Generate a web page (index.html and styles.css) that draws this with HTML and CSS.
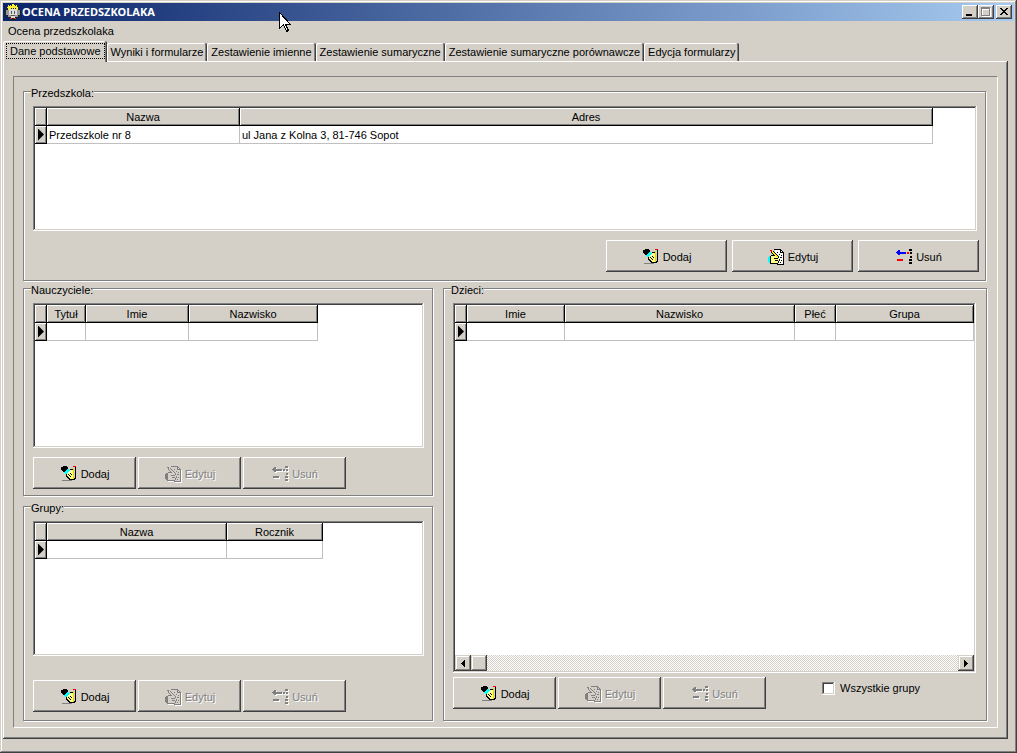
FILE: index.html
```
<!DOCTYPE html>
<html lang="pl">
<head>
<meta charset="utf-8">
<title>OCENA PRZEDSZKOLAKA</title>
<link rel="stylesheet" href="styles.css">
</head>
<body>
<svg class="defs" width="0" height="0" aria-hidden="true">
  <defs>
    <symbol id="i-add" viewBox="0 0 16 16" shape-rendering="crispEdges">
      <path fill="#ff8" d="M9 3h3v10H9v-1H8v-1H7v-1H6V7h1V6h1V4h1z"/>
      <path fill="#000" d="M2 0h4v1h1v2H6v1H5v1H4v1H2V5H1V4H0V1h2zM9 3h3v1H9zM5 8h1v2h1v1h1v1h1v1h3v1H8v-1H7v-1H6v-1H5zM14 1h1v12h-1v1h-2v-1h1v-1h1zM9 7h1v1h1v1h-1V8H9zM7 8h1v1h1v1h1v1H9v-1H8V9H7z"/>
      <path fill="#0ff" d="M6 3h2v1h1v1H8v1H7v1H6v1H4V7H3V6h1V5h1V4h1z"/>
      <path fill="#dd0" d="M12 2h1v11h-1z"/>
      <path fill="#fff" d="M10 5h1v1h-1zM8 6h1v1H8z"/>
      <path fill="#f00" d="M12 0h3v1h-3z"/>
      <path fill="#808080" d="M1 14h10v1H1z"/>
    </symbol>
    <symbol id="i-edit" viewBox="0 0 16 16" shape-rendering="crispEdges">
      <path class="paper" d="M7 1h6v1h1v1h1v12H7z"/>
      <path class="hand" d="M3 7h5v1h3v4h-1v2H3z"/>
      <path class="cuff" d="M1 7h1v7H1zM0 8h1v5H0z"/>
      <path class="ink" d="M6 0h7v1H6zM13 1h1v1h-1zM14 2h1v1h-1zM15 3h1v13H9v-1h6V3zM12 1h1v2h2v1h-3zM2 7h1V6h3v1H3v7H2zM2 14h8v1H2zM10 12h1v2h-1zM11 10h1v2h-1zM6 9h4v1H6zM7 11h3v1H7zM3 3h1v1h1v1h1v1h1v1H6V6H5V5H4V4H3zM5 2h1v1h1v1h1v1h1v1h1v1h1v2h-1V7H9V6H8V5H7V4H6V3H5zM13 6h1v1h-1zM12 8h2v1h-2zM13 11h1v1h-1zM12 13h1v1h-1zM9 3h1v1H9zM11 5h1v1h-1z"/>
      <path class="lead" d="M2 1h2v1H2zM3 2h1v1H3z"/>
      <path class="pen" d="M4 2h1v1h1v1h1v1h1v1h1v1h1v1H8V7H7V6H6V5H5V4H4z"/>
    </symbol>
    <symbol id="i-del" viewBox="0 0 16 16" shape-rendering="crispEdges">
      <path class="arrow" d="M0 3h1V2h1V1h2v2h6v2H4v1H2V5H1V4H0z"/>
      <path class="minus" d="M1 10h6v2H1zM11 3h2v2h-2z"/>
      <path class="ink" d="M13 0h3v2h-3zM14 3h2v2h-2zM14 7h2v2h-2zM13 10h3v2h-3zM13 13h3v2h-3z"/>
    </symbol>
  </defs>
</svg>
<div class="window">
  <header class="titlebar">
    <svg class="app-icon" width="16" height="16" viewBox="0 0 16 16" shape-rendering="crispEdges" aria-hidden="true">
      <path fill="#222" d="M4 1h8v2h2v3h2v6h-2v2h-3v2H5v-2H2v-2H0V6h2V3h2z"/>
      <path fill="#999" d="M3 5h10v1h2v5h-2v2H3v-2H1V6h2z"/>
      <path fill="#ddd" d="M4 5h8v6h-2v3H6v-3H4z"/>
      <path fill="#fe3" d="M3 1h1v1h1V1h1v1h1V0h2v1h1v1h1V1h1v2h1v3h-1V5h-1V4h-1v1H9V4H8v1H7V4H6v1H5v1H3V4H2V3h1z"/>
      <path fill="#555" d="M6 7h1v3H6zM9 7h1v3H9zM6 11h4v1H6z"/>
      <path fill="#b33" d="M5 14h2v1H5zM9 14h2v1H9z"/>
    </svg>
    <h1>OCENA PRZEDSZKOLAKA</h1>
    <div class="caption">
      <button type="button" aria-label="Minimalizuj"><svg width="12" height="10" viewBox="0 0 12 10" shape-rendering="crispEdges"><path d="M2 7h6v2H2z"/></svg></button>
      <button type="button" aria-label="Maksymalizuj" disabled><svg width="12" height="10" viewBox="0 0 12 10" shape-rendering="crispEdges"><path fill="#fff" d="M2 1h9v9H2z"/><path fill="#808080" d="M1 0h9v9H1z"/><path fill="#d4d0c8" d="M2 2h7v6H2z"/><path fill="#fff" d="M2 2h7v1H3v5H2z"/></svg></button>
      <button type="button" class="close" aria-label="Zamknij"><svg width="12" height="10" viewBox="0 0 12 10" shape-rendering="crispEdges"><path d="M2 1h2v1h1v1h2V2h1V1h2v1H9v1H8v1H7v1h1v1h1v1h1v1H8V7H7V6H5v1H4v1H2V7h1V6h1V5h1V4H4V3H3V2H2z"/></svg></button>
    </div>
  </header>
  <nav class="menubar"><button type="button">Ocena przedszkolaka</button></nav>
  <div class="tabs" role="tablist">
    <button type="button" role="tab" aria-selected="true" class="tab active"><span>Dane podstawowe</span></button>
    <button type="button" role="tab" class="tab">Wyniki i formularze</button>
    <button type="button" role="tab" class="tab">Zestawienie imienne</button>
    <button type="button" role="tab" class="tab">Zestawienie sumaryczne</button>
    <button type="button" role="tab" class="tab">Zestawienie sumaryczne porównawcze</button>
    <button type="button" role="tab" class="tab">Edycja formularzy</button>
  </div>
  <main class="page">
    <div class="panel">
      <fieldset class="group">
        <legend>Przedszkola:</legend>
        <div class="grid schools">
          <table>
            <colgroup><col class="mark"><col class="c-school"><col></colgroup>
            <thead><tr><th></th><th>Nazwa</th><th>Adres</th></tr></thead>
            <tbody><tr><th class="current"></th><td>Przedszkole nr 8</td><td>ul Jana z Kolna 3, 81-746 Sopot</td></tr></tbody>
          </table>
        </div>
        <div class="actions wide">
          <button type="button" class="btn"><svg class="icon" width="16" height="16"><use href="#i-add"/></svg>Dodaj</button>
          <button type="button" class="btn"><svg class="icon" width="16" height="16"><use href="#i-edit"/></svg>Edytuj</button>
          <button type="button" class="btn"><svg class="icon" width="16" height="16"><use href="#i-del"/></svg>Usuń</button>
        </div>
      </fieldset>
      <div class="columns">
        <div class="left">
          <fieldset class="group teachers">
            <legend>Nauczyciele:</legend>
            <div class="grid">
              <table>
                <colgroup><col class="mark"><col class="c-title"><col class="c-first"><col class="c-last"></colgroup>
                <thead><tr><th></th><th>Tytuł</th><th>Imie</th><th>Nazwisko</th></tr></thead>
                <tbody><tr><th class="current"></th><td></td><td></td><td></td></tr></tbody>
              </table>
            </div>
            <div class="actions">
              <button type="button" class="btn"><svg class="icon" width="16" height="16"><use href="#i-add"/></svg>Dodaj</button>
              <button type="button" class="btn" disabled><svg class="icon" width="16" height="16"><use href="#i-edit"/></svg>Edytuj</button>
              <button type="button" class="btn" disabled><svg class="icon" width="16" height="16"><use href="#i-del"/></svg>Usuń</button>
            </div>
          </fieldset>
          <fieldset class="group classes">
            <legend>Grupy:</legend>
            <div class="grid">
              <table>
                <colgroup><col class="mark"><col class="c-group"><col class="c-year"></colgroup>
                <thead><tr><th></th><th>Nazwa</th><th>Rocznik</th></tr></thead>
                <tbody><tr><th class="current"></th><td></td><td></td></tr></tbody>
              </table>
            </div>
            <div class="actions">
              <button type="button" class="btn"><svg class="icon" width="16" height="16"><use href="#i-add"/></svg>Dodaj</button>
              <button type="button" class="btn" disabled><svg class="icon" width="16" height="16"><use href="#i-edit"/></svg>Edytuj</button>
              <button type="button" class="btn" disabled><svg class="icon" width="16" height="16"><use href="#i-del"/></svg>Usuń</button>
            </div>
          </fieldset>
        </div>
        <fieldset class="group children">
          <legend>Dzieci:</legend>
          <div class="grid">
            <table>
              <colgroup><col class="mark"><col class="c-name"><col class="c-surname"><col class="c-sex"><col></colgroup>
              <thead><tr><th></th><th>Imie</th><th>Nazwisko</th><th>Płeć</th><th>Grupa</th></tr></thead>
              <tbody><tr><th class="current"></th><td></td><td></td><td></td><td></td></tr></tbody>
            </table>
            <div class="scrollbar">
              <button type="button" aria-label="W lewo"><svg width="4" height="7" viewBox="0 0 4 7" shape-rendering="crispEdges"><path d="M3 0h1v7H3V6H2V5H1V4H0V3h1V2h1V1h1z"/></svg></button>
              <span class="thumb"></span>
              <button type="button" class="end" aria-label="W prawo"><svg width="4" height="7" viewBox="0 0 4 7" shape-rendering="crispEdges"><path d="M0 0h1v1h1v1h1v1h1v1H3v1H2v1H1v1H0z"/></svg></button>
            </div>
          </div>
          <div class="actions">
            <button type="button" class="btn"><svg class="icon" width="16" height="16"><use href="#i-add"/></svg>Dodaj</button>
            <button type="button" class="btn" disabled><svg class="icon" width="16" height="16"><use href="#i-edit"/></svg>Edytuj</button>
            <button type="button" class="btn" disabled><svg class="icon" width="16" height="16"><use href="#i-del"/></svg>Usuń</button>
            <label class="check"><input type="checkbox">Wszystkie grupy</label>
          </div>
        </fieldset>
      </div>
    </div>
  </main>
  <svg class="cursor" width="12" height="21" viewBox="0 0 12 21" shape-rendering="crispEdges" aria-hidden="true"><path fill="#fff" stroke="#000" d="M.5.5v16l4-4 3 7 2-1-3-6h5z"/></svg>
</div>
</body>
</html>
```
FILE: styles.css
```
:root {
  --face: #d4d0c8;
  --shade: #808080;
  --dark: #404040;
}

* { box-sizing: border-box; }

body {
  margin: 0;
  background: var(--face);
  color: #000;
  font: 11px/14px "Liberation Sans", Arial, sans-serif;
}

button {
  margin: 0;
  padding: 0;
  border: 0;
  background: var(--face);
  color: inherit;
  font: inherit;
}

.defs { position: absolute; }

.window {
  position: relative;
  display: flex;
  flex-direction: column;
  min-height: 100vh;
  padding: 3px 2px 2px 3px;
  box-shadow: inset -1px -1px var(--dark), inset 1px 1px var(--face), inset -2px -2px var(--shade), inset 2px 2px #fff;
}

/* title bar */
.titlebar {
  display: flex;
  align-items: center;
  height: 18px;
  margin-right: 1px;
  padding: 0 2px;
  background: linear-gradient(to right, #0a246a, #a6caf0);
  color: #fff;
}

.titlebar h1 {
  flex: 1;
  margin: 0 0 0 1px;
  font: bold 11px/14px "Noto Sans", "DejaVu Sans", sans-serif;
}

.caption { display: flex; }

.caption button {
  display: flex;
  align-items: center;
  justify-content: center;
  width: 16px;
  height: 14px;
  box-shadow: inset -1px -1px var(--dark), inset 1px 1px #fff, inset -2px -2px var(--shade);
}

.caption .close { margin-left: 2px; }

.cursor {
  position: absolute;
  left: 279px;
  top: 12px;
}

/* menu and tabs */
.menubar {
  display: flex;
  height: 20px;
  padding: 0 5px;
}

.tabs {
  display: flex;
  align-items: flex-end;
  height: 20px;
}

.tab {
  height: 18px;
  padding: 0 4px;
  border-radius: 2px 2px 0 0;
  box-shadow: inset -1px 0 var(--dark), inset 1px 1px #fff, inset -2px 0 var(--shade);
  white-space: nowrap;
}

.tab.active {
  position: relative;
  height: 21px;
  margin-bottom: -1px;
  padding: 2px 2px 3px 3px;
}

.tab.active span {
  display: block;
  padding: 0 4px;
  outline: 1px dotted #000;
  outline-offset: -1px;
  line-height: 16px;
}

.page {
  display: flex;
  flex: 1;
  margin: 0 7px 12px 0;
  padding: 15px 10px 11px 10px;
  box-shadow: inset -1px -1px var(--dark), inset 1px 1px #fff, inset -2px -2px var(--shade);
}

.panel {
  display: flex;
  flex: 1;
  flex-direction: column;
  min-width: 0;
  padding: 8px 10px 6px 9px;
  border: 1px solid;
  border-color: var(--shade) #fff #fff var(--shade);
}

/* group boxes */
.group {
  display: flex;
  flex-direction: column;
  min-width: 0;
  margin: 0 1px 0 0;
  padding: 8px 6px 8px 9px;
  border: 1px solid var(--shade);
  box-shadow: 1px 1px #fff, inset 1px 1px #fff;
}

.group legend {
  height: 13px;
  margin-left: -2px;
  padding: 0;
  background: var(--face);
  line-height: 16px;
}

.columns {
  display: grid;
  flex: 1;
  grid-template-columns: 410px 1fr;
  column-gap: 10px;
  margin-top: 1px;
}

.left {
  display: flex;
  flex-direction: column;
  gap: 4px;
}

.left .group { margin-right: 0; }
.teachers { padding-bottom: 6px; }
.classes { flex: 1; }
.children { margin-right: 0; padding-bottom: 11px; }

/* data grids */
.grid {
  display: flex;
  flex-direction: column;
  flex: 1;
  min-height: 124px;
  margin-right: 2px;
  padding: 2px;
  background: #fff;
  box-shadow: inset -1px -1px #fff, inset 1px 1px var(--shade), inset -2px -2px var(--face), inset 2px 2px var(--dark);
}

.schools { min-height: 125px; }
.teachers .grid { min-height: 145px; }
.children .grid { margin-right: 4px; }

.grid table {
  table-layout: fixed;
  width: 0;
  border-spacing: 0;
}

.schools table { width: calc(100% - 42px); }
.children table { width: 100%; }

.mark { width: 12px; }
.c-school { width: 193px; }
.c-title { width: 39px; }
.c-first { width: 103px; }
.c-last { width: 129px; }
.c-group { width: 180px; }
.c-year { width: 96px; }
.c-name { width: 98px; }
.c-surname { width: 230px; }
.c-sex { width: 41px; }

.grid th,
.grid td {
  height: 18px;
  padding: 0 2px;
  overflow: hidden;
  text-align: left;
  font-weight: normal;
  white-space: nowrap;
}

.grid th {
  padding: 0;
  border: 1px solid #000;
  border-width: 0 1px 1px 0;
  background: var(--face);
  box-shadow: inset 1px 1px #fff, inset -1px -1px var(--shade);
  text-align: center;
}

.grid td {
  border: 1px solid #c0c0c0;
  border-width: 0 1px 1px 0;
}

.current::before {
  content: "";
  display: block;
  width: 6px;
  height: 12px;
  margin-left: 3px;
  background: #000;
  clip-path: polygon(0 0, 100% 50%, 0 100%);
}

/* scroll bar */
.scrollbar {
  display: flex;
  height: 16px;
  margin-top: auto;
  background: repeating-conic-gradient(#fff 0 25%, var(--face) 0 50%) 0 0 / 2px 2px;
}

.scrollbar button,
.thumb {
  display: flex;
  align-items: center;
  justify-content: center;
  width: 16px;
  height: 16px;
  background: var(--face);
  box-shadow: inset -1px -1px var(--dark), inset 1px 1px var(--face), inset -2px -2px var(--shade), inset 2px 2px #fff;
}

.scrollbar .end { margin-left: auto; }

/* buttons */
.actions {
  display: flex;
  gap: 2px;
  margin-top: 9px;
}

.actions.wide {
  gap: 5px;
  justify-content: flex-end;
}

.classes .actions { margin-top: 24px; }
.children .actions { margin-top: 4px; }

.btn {
  display: flex;
  align-items: center;
  justify-content: center;
  gap: 4px;
  width: 103px;
  height: 32px;
  padding: 1px 0 0 1px;
  box-shadow: inset -1px -1px var(--dark), inset 1px 1px #fff, inset -2px -2px var(--shade);
}

.wide .btn { width: 121px; }

.btn:disabled {
  --ink: var(--shade);
  --hollow: var(--face);
  color: var(--shade);
  text-shadow: 1px 1px #fff;
}

.btn:disabled .icon { filter: drop-shadow(1px 1px 0 #fff); }

/* icon colours, replaced by one ink on disabled buttons */
.ink { fill: var(--ink, #000); }
.arrow { fill: var(--ink, #00f); }
.minus { fill: var(--ink, #f00); }
.lead { fill: var(--ink, #f00); }
.cuff { fill: var(--ink, #0ff); }
.paper { fill: var(--hollow, #fff); }
.hand { fill: var(--hollow, #ff8); }
.pen { fill: var(--hollow, #fe0); }

.check {
  display: flex;
  align-items: center;
  gap: 5px;
  height: 22px;
  margin-left: 54px;
}

.check input {
  appearance: none;
  width: 13px;
  height: 13px;
  margin: 0;
  background: #fff;
  box-shadow: inset -1px -1px #fff, inset 1px 1px var(--shade), inset -2px -2px var(--face), inset 2px 2px var(--dark);
}
```
